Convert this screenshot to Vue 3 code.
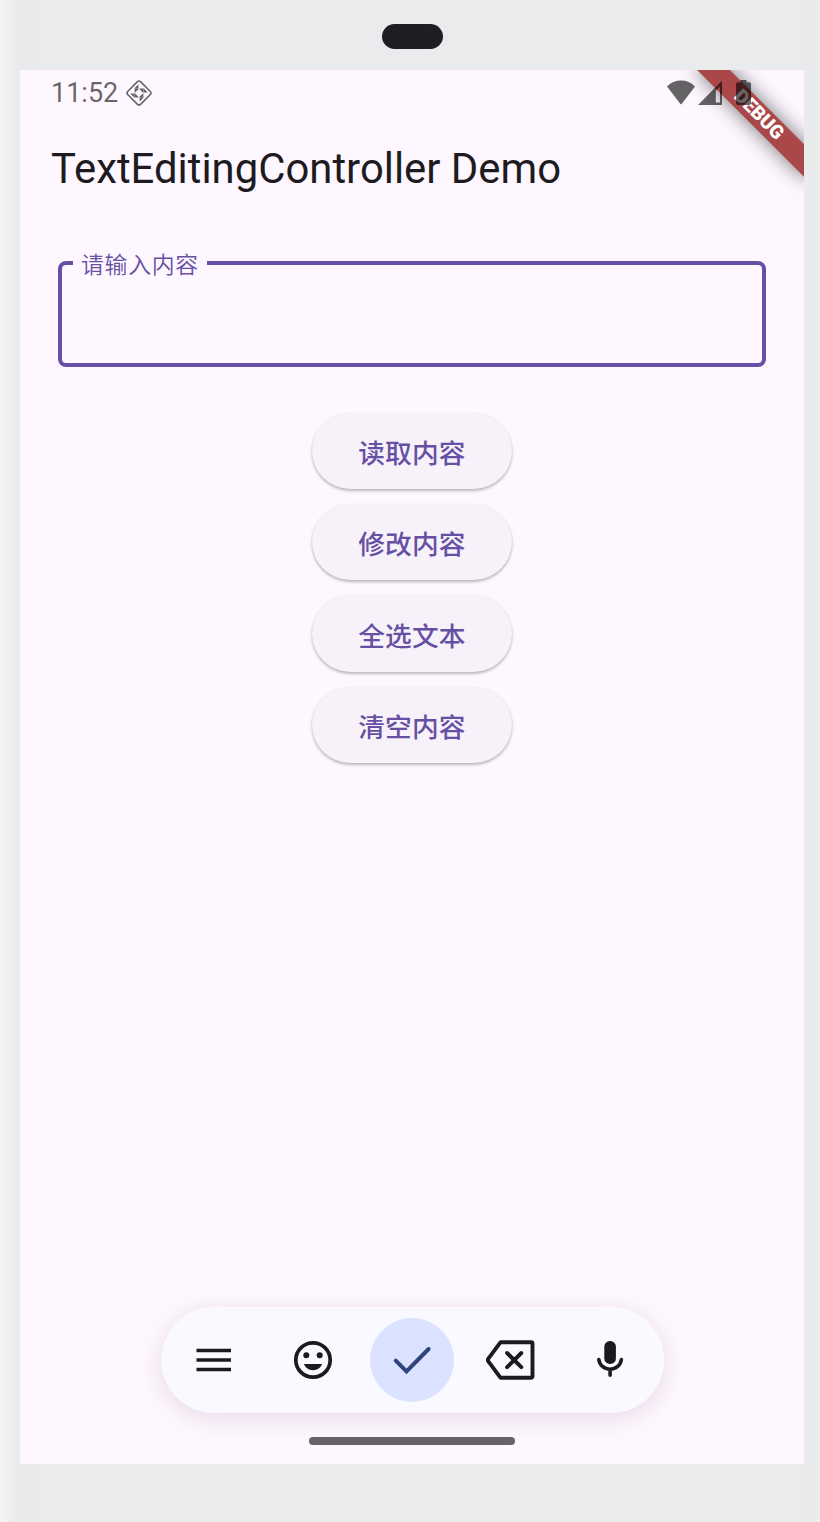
<template>
  <div class="device">
    <div class="camera"></div>

    <div class="screen">
      <div class="status-bar">
        <div class="status-left">
          <span class="time">11:52</span>
          <svg class="app-icon" width="28" height="28" viewBox="0 0 28 28">
            <rect x="4.900" y="4.900" width="18.200" height="18.200" rx="2.500" transform="rotate(45 14 14)" fill="none" stroke="currentColor" stroke-width="1.600" />
            <g v-for="r in [0, 90, 180, 270]" :key="r" :transform="`rotate(${r} 14 14)`" fill="currentColor">
              <path d="M13.400 5.200v4.500H9z" />
              <path d="M9.600 10h4.200l-4.200 4z" />
            </g>
          </svg>
        </div>
        <div class="status-right">
          <svg width="28" height="25" viewBox="0 0 28 25">
            <path d="M0 6.400C3.800 2.500 8.700.5 14 .5s10.200 2 14 5.900L14.600 23.900a.8.8 0 0 1-1.200 0z" fill="currentColor" />
          </svg>
          <svg class="signal" width="24" height="25" viewBox="0 0 24 25">
            <path d="M24 .8V25H0zM22 6.500L17.800 10.700V22.600H22z" fill="currentColor" fill-rule="evenodd" />
          </svg>
          <svg class="battery" width="15" height="25" viewBox="0 0 15 25">
            <path d="M4.500 0h6v2.200H13a2 2 0 0 1 2 2V23a2 2 0 0 1-2 2H2a2 2 0 0 1-2-2V4.200a2 2 0 0 1 2-2h2.500z" fill="currentColor" />
          </svg>
        </div>
      </div>

      <div class="app-bar">
        <h1>TextEditingController Demo</h1>
      </div>

      <div class="body">
        <fieldset class="field">
          <legend>请输入内容</legend>
          <input v-model="text" ref="inputRef" type="text" />
        </fieldset>

        <div class="buttons">
          <button v-for="b in buttons" :key="b.label" @click="b.action">{{ b.label }}</button>
        </div>
      </div>

      <div class="keyboard-bar">
        <div class="key">
          <svg width="36" height="24" viewBox="0 0 36 24" stroke="#1a1b21" stroke-width="3.400">
            <path d="M.5 2.500h34.500M.5 12h34.500M.5 21.500h34.500" />
          </svg>
        </div>
        <div class="key">
          <svg width="40" height="40" viewBox="0 0 40 40">
            <circle cx="20" cy="20" r="17.200" fill="none" stroke="#1a1b21" stroke-width="3.700" />
            <circle cx="13.300" cy="15.200" r="3" fill="#1a1b21" />
            <circle cx="26.700" cy="15.200" r="3" fill="#1a1b21" />
            <path d="M11 24h18c-1.500 4-4.800 6.200-9 6.200S12.500 28 11 24z" fill="#1a1b21" />
          </svg>
        </div>
        <div class="key done">
          <svg width="40" height="40" viewBox="0 0 40 40">
            <path d="M3.800 20.600l10.700 10.700L36.600 9" fill="none" stroke="#30447a" stroke-width="4" stroke-linecap="round" />
          </svg>
        </div>
        <div class="key">
          <svg width="50" height="40" viewBox="1 0 50 40" fill="none" stroke="#1a1b21" stroke-width="3.900" stroke-linecap="round" stroke-linejoin="round">
            <path d="M15.600 2.200H46a1.500 1.500 0 0 1 1.500 1.500v32.600a1.500 1.500 0 0 1-1.500 1.500H15.600L3.200 21.200q-.9-1.200 0-2.400z" />
            <path d="M22.100 13l14.200 14.200M36.300 13L22.100 27.200" />
          </svg>
        </div>
        <div class="key">
          <svg width="28" height="40" viewBox="0 0 28 40">
            <rect x="8.300" y="1" width="11.600" height="23" rx="5.600" fill="#1a1b21" />
            <path d="M2.800 19.500c.8 5.700 5.400 9.700 11.300 9.700s10.500-4 11.300-9.700M14.100 29.200V35.300" fill="none" stroke="#1a1b21" stroke-width="3.600" stroke-linecap="round" />
          </svg>
        </div>
      </div>

      <div class="home-indicator"></div>
      <div class="debug-banner"><span>DEBUG</span></div>
    </div>
  </div>
</template>

<script setup>
import { ref } from 'vue'

const text = ref('')
const inputRef = ref(null)

const readText = () => { console.log(text.value) }
const changeText = () => { text.value = 'Flutter' }
const selectAll = () => {
  inputRef.value.focus()
  inputRef.value.select()
}
const clearText = () => { text.value = '' }

const buttons = [
  { label: '读取内容', action: readText },
  { label: '修改内容', action: changeText },
  { label: '全选文本', action: selectAll },
  { label: '清空内容', action: clearText }
]
</script>

<style>
body { margin: 0; background: #eaebed; }
</style>

<style scoped>
.device {
  box-sizing: border-box;
  width: 820px;
  height: 1522px;
  padding: 0 16px 58px 20px;
  display: flex;
  flex-direction: column;
  background: linear-gradient(90deg, #f4f4f5 0, #f2f2f3 6px, #ebeced 14px, #e9eaeb 20px, #eaebed 40px, #eaebed 804px, #e9eaeb 814px, #eeeff0 820px);
  font-family: Roboto, "Noto Sans CJK SC", sans-serif;
}
.camera { width: 61px; height: 25px; margin: 24px auto 21px 361.5px; border-radius: 13px; background: #1d1f24; }
.screen { position: relative; flex: 1; display: flex; flex-direction: column; background: #fef7ff; overflow: hidden; }

.status-bar { position: relative; z-index: 2; height: 46px; box-sizing: border-box; display: flex; justify-content: space-between; padding: 0 53px 0 31px; color: rgba(0, 0, 0, 0.6); }
.status-left { display: flex; align-items: center; gap: 7px; height: 46px; }
.time { font-size: 27px; line-height: 46px; }
.status-right { display: flex; align-items: flex-start; padding-top: 10px; }
.signal { margin-left: 3px; }
.battery { margin-left: 14px; }

.app-bar { height: 105px; display: flex; align-items: center; padding-left: 31px; }
.app-bar h1 { margin: 0; font-size: 41.850px; font-weight: 400; line-height: 52px; color: #1d1b20; white-space: nowrap; }

.body { flex: 1; padding: 0 38px; }
.field { box-sizing: border-box; height: 122px; margin: 24px 0 0; padding: 0 20px; border: 4px solid #6750a4; border-radius: 8px; }
.field legend { margin-left: -9px; padding: 6px 8px 0; font-size: 22.900px; line-height: 30px; letter-spacing: 0.700px; font-weight: 350; color: #6750a4; }
.field input { width: 100%; height: 70px; padding: 0; border: none; outline: none; background: none; font-family: inherit; font-size: 30px; color: #1d1b20; }

.buttons { display: flex; flex-direction: column; align-items: center; gap: 15.200px; margin-top: 45.500px; }
.buttons button { width: 199.400px; height: 76.300px; padding: 1px 0 0; border: none; border-radius: 39px; background: #f7f2fa; color: #6750a4; font-family: inherit; font-size: 26.700px; font-weight: 500; letter-spacing: 0.200px; cursor: pointer; box-shadow: 0 2px 3px rgba(0, 0, 0, 0.26), 0 0 2px rgba(0, 0, 0, 0.06); }

.keyboard-bar { box-sizing: border-box; align-self: center; width: 503px; height: 106px; padding: 0 3px; border-radius: 53px; background: #f9f9ff; display: flex; align-items: center; justify-content: center; gap: 15px; box-shadow: 0 5px 24px rgba(60, 20, 60, 0.12); }
.key { width: 84px; height: 84px; display: flex; align-items: center; justify-content: center; border-radius: 50%; }
.key svg { display: block; }
.done { background: #dae2ff; }
.home-indicator { align-self: center; width: 206px; height: 8px; margin: 24px 0 19px; border-radius: 4px; background: #676369; }

.debug-banner { position: absolute; z-index: 1; top: 35px; right: -32.500px; width: 154px; height: 22.800px; transform: rotate(45deg); background: #aa4749; box-shadow: 0 0 20px rgba(0, 0, 0, 0.55); display: flex; align-items: center; justify-content: center; color: #fff; font-size: 19.200px; font-weight: 900; line-height: 22px; }
.debug-banner span { margin-right: 4px; }
</style>
